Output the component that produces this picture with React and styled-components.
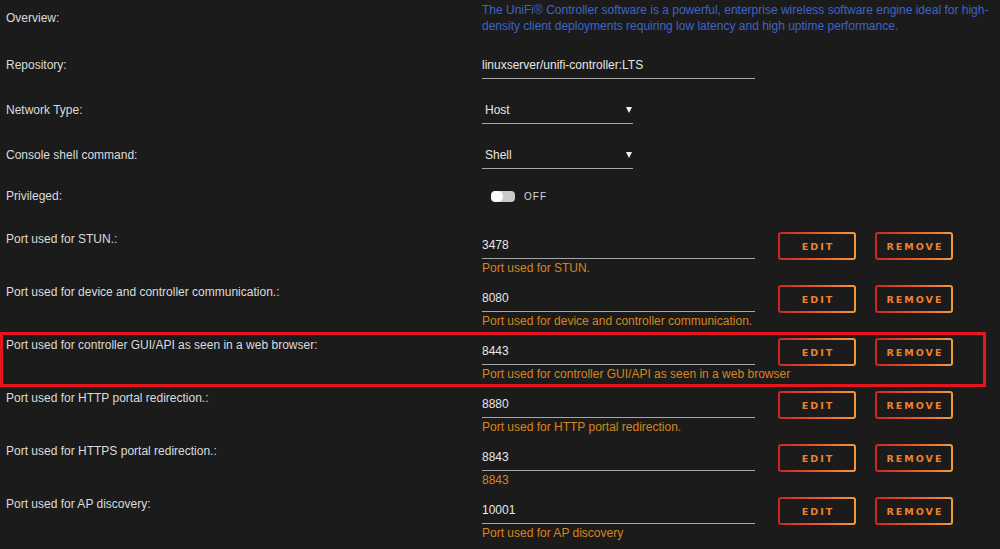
import React from 'react';
import styled, { createGlobalStyle, css } from 'styled-components';

const GlobalStyle = createGlobalStyle`
  body {
    margin: 0;
    background: #1b1b1b;
    font-family: "Liberation Sans", Arial, sans-serif;
    color: #dedede;
  }
`;

const Page = styled.div`
  padding-left: 6px;
  width: 994px;
  height: 549px;
  overflow: hidden;
  box-sizing: border-box;
`;

const Row = styled.div`
  position: relative;
  display: grid;
  grid-template-columns: 476px 273px auto;
  align-items: ${p => p.$align || 'start'};
  align-content: start;
  height: ${p => p.$h}px;
  padding-top: ${p => p.$pt || 0}px;
  box-sizing: border-box;

  ${p => p.$highlight && css`
    &::after {
      content: '';
      position: absolute;
      top: -5px;
      left: -6px;
      width: 986px;
      height: 55px;
      border: 3px solid #e5161d;
      box-sizing: border-box;
      pointer-events: none;
    }
  `}
`;

const Label = styled.div`
  font-size: 12px;
  line-height: 16px;
  color: #dcdcdc;
`;

const Description = styled.div`
  grid-column: 2 / 4;
  font-size: 12px;
  line-height: 16px;
  color: #3f63c8;
  white-space: nowrap;
`;

const Field = styled.div`
  margin-top: ${p => p.$mt || 0}px;
`;

const Input = styled.div`
  width: ${p => p.$w || 273}px;
  font-size: 12px;
  line-height: 16px;
  padding-bottom: 5px;
  border-bottom: 1px solid #a6a6a6;
  color: #e8e8e8;
  box-sizing: border-box;
`;

const Select = styled(Input)`
  display: flex;
  justify-content: space-between;
  align-items: center;
  padding-left: 3px;
  padding-right: 1px;
`;

const Arrow = styled.svg`
  width: 6px;
  height: 6px;
  fill: #f2f2f2;
`;

const Helper = styled.div`
  margin-top: 1px;
  font-size: 12px;
  line-height: 16px;
  color: #d8851c;
  white-space: nowrap;
`;

const ToggleWrap = styled.div`
  display: flex;
  align-items: center;
  gap: 9px;
  margin-left: 9px;
`;

const Track = styled.div`
  width: 24px;
  height: 11px;
  border-radius: 4px;
  background: #c9c9c9;
  display: flex;
  align-items: center;
`;

const Knob = styled.div`
  width: 12px;
  height: 11px;
  border-radius: 5px;
  background: #fbfbfb;
`;

const ToggleText = styled.span`
  font-size: 10px;
  letter-spacing: 1px;
  color: #d8d8d8;
`;

const Buttons = styled.div`
  display: flex;
  gap: 19px;
  margin-left: 23px;
  margin-top: 1px;
`;

const Button = styled.button`
  width: 78px;
  height: 28px;
  border: 2px solid transparent;
  border-radius: 3px;
  background:
    linear-gradient(#1b1b1b, #1b1b1b) padding-box,
    linear-gradient(90deg, #cf2326 0%, #e85a2a 50%, #f39a35 100%) border-box;
  color: #f0822e;
  font-family: "DejaVu Sans", sans-serif;
  font-weight: bold;
  font-size: 9.5px;
  letter-spacing: 2px;
  padding: 0 0 0 2px;
  cursor: pointer;
`;

const ports = [
  { label: 'Port used for STUN.:', value: '3478', help: 'Port used for STUN.' },
  { label: 'Port used for device and controller communication.:', value: '8080', help: 'Port used for device and controller communication.' },
  { label: 'Port used for controller GUI/API as seen in a web browser:', value: '8443', help: 'Port used for controller GUI/API as seen in a web browser', highlight: true },
  { label: 'Port used for HTTP portal redirection.:', value: '8880', help: 'Port used for HTTP portal redirection.' },
  { label: 'Port used for HTTPS portal redirection.:', value: '8843', help: '8843' },
  { label: 'Port used for AP discovery:', value: '10001', help: 'Port used for AP discovery' },
];

const SelectField = ({ value }) => (
  <Select $w={151}>
    <span>{value}</span>
    <Arrow viewBox="0 0 6 6"><polygon points="0,0 6,0 3,6" /></Arrow>
  </Select>
);

export default function App() {
  return (
    <Page>
      <GlobalStyle />
      <Row $h={57} $pt={2} $align="center">
        <Label>Overview:</Label>
        <Description>
          The UniFi® Controller software is a powerful, enterprise wireless software engine ideal for high-<br />
          density client deployments requiring low latency and high uptime performance.
        </Description>
      </Row>

      <Row $h={45} $align="baseline">
        <Label>Repository:</Label>
        <Input>linuxserver/unifi-controller:LTS</Input>
      </Row>

      <Row $h={45} $align="baseline">
        <Label>Network Type:</Label>
        <SelectField value="Host" />
      </Row>

      <Row $h={23} $align="baseline">
        <Label>Console shell command:</Label>
        <SelectField value="Shell" />
      </Row>

      <Row $h={61} $pt={18} $align="center">
        <Label>Privileged:</Label>
        <ToggleWrap>
          <Track><Knob /></Track>
          <ToggleText>OFF</ToggleText>
        </ToggleWrap>
      </Row>

      {ports.map(p => (
        <Row key={p.label} $h={53} $highlight={p.highlight}>
          <Label>{p.label}</Label>
          <Field $mt={6}>
            <Input>{p.value}</Input>
            <Helper>{p.help}</Helper>
          </Field>
          <Buttons>
            <Button>EDIT</Button>
            <Button>REMOVE</Button>
          </Buttons>
        </Row>
      ))}
    </Page>
  );
}
